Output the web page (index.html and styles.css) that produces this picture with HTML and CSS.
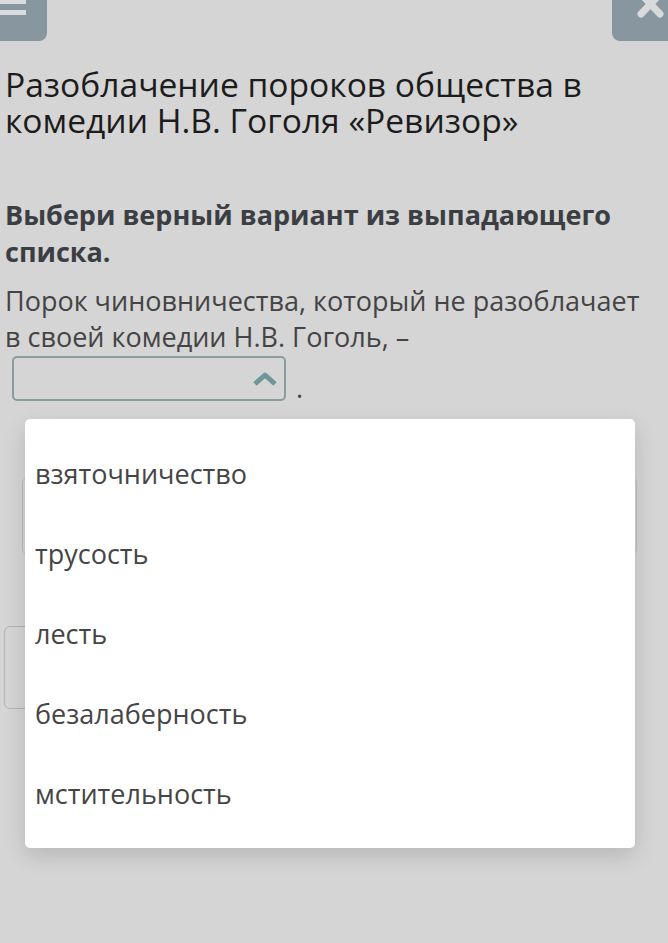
FILE: index.html
```html
<!DOCTYPE html>
<html lang="ru">
<head>
  <meta charset="UTF-8" />
  <meta name="viewport" content="width=device-width, initial-scale=1.0"/>
  <title>Ревизор - задание</title>
  <link rel="stylesheet" href="styles.css">
</head>
<body>
  <header class="topbar">
    <button class="corner-btn menu-btn" aria-label="Меню">
      <svg width="30" height="18" viewBox="0 0 30 18">
        <rect x="0" y="-4" width="26" height="8" fill="#d9dcdf"/>
        <rect x="0" y="10" width="26" height="5" fill="#d9dcdf"/>
      </svg>
    </button>
    <button class="corner-btn close-btn" aria-label="Закрыть">
      <svg width="34" height="22" viewBox="0 0 34 22">
        <path d="M7 -6 L26 14 M26 -6 L7 14" stroke="#d8dadc" stroke-width="7" stroke-linecap="round"/>
      </svg>
    </button>
  </header>

  <main class="task">
    <h1 class="task-title">Разоблачение пороков общества в комедии Н.В. Гоголя «Ревизор»</h1>

    <p class="task-hint">Выбери верный вариант из выпадающего списка.</p>

    <p class="question">Порок чиновничества, который не разоблачает в своей комедии Н.В. Гоголь, –</p>

    <div class="answer-line">
      <div class="select-box">
        <svg class="chevron" width="26" height="16" viewBox="0 0 26 16">
          <path d="M3 13 L13 4 L23 13" fill="none" stroke="#6f9698" stroke-width="5" stroke-linejoin="round"/>
        </svg>
      </div>
      <span class="dot">.</span>
    </div>

    <div class="hidden-card"></div>
    <div class="hidden-btn"></div>

    <ul class="dropdown">
      <li>взяточничество</li>
      <li>трусость</li>
      <li>лесть</li>
      <li>безалаберность</li>
      <li>мстительность</li>
    </ul>
  </main>
</body>
</html>
```

FILE: styles.css
```css
body {
  margin: 0;
  font-family: "Open Sans", "Noto Sans", sans-serif;
  background: #d5d5d5;
  color: #333;
  height: 943px;
  overflow: hidden;
}
.topbar {
  display: flex;
  justify-content: space-between;
  height: 41px;
}
.corner-btn {
  border: none;
  padding: 0;
  background: #8896a0;
  height: 41px;
  display: flex;
}
.menu-btn {
  width: 47px;
  border-radius: 0 0 8px 0;
}
.close-btn {
  width: 56px;
  border-radius: 0 0 0 8px;
  justify-content: flex-end;
}
.task {
  position: relative;
  padding: 0 0 0 5px;
}
.task-title {
  margin: 25px 0 0;
  font-size: 33.6px;
  line-height: 36px;
  font-weight: 400;
  color: #1c1c1c;
  padding-right: 60px;
}
.task-hint {
  margin: 58px 0 0;
  font-size: 27px;
  line-height: 37px;
  font-weight: 700;
  color: #3b3e42;
}
.question {
  margin: 13px 0 0;
  font-size: 27px;
  line-height: 36px;
  color: #444;
  padding-right: 20px;
}
.answer-line {
  display: flex;
  align-items: flex-end;
  gap: 10px;
  margin: 1px 0 0 7px;
}
.select-box {
  width: 264px;
  height: 41px;
  border: 2px solid #8a9c9e;
  border-radius: 5px;
  display: flex;
  align-items: center;
  justify-content: flex-end;
  padding-right: 6px;
  box-sizing: content-box;
}
.dot {
  font-size: 27px;
  line-height: 26px;
  color: #444;
}
.hidden-card {
  margin: 76px 0 0 17px;
  width: 613px;
  height: 76px;
  border: 1px solid #bdbdbd;
  border-radius: 6px;
}
.hidden-btn {
  margin: 71px 0 0 -1px;
  width: 200px;
  height: 81px;
  border: 1px solid #b3b3b3;
  border-radius: 6px;
}
.dropdown {
  position: absolute;
  left: 25px;
  top: 353px;
  width: 610px;
  margin: 0;
  padding: 15px 0 14px;
  list-style: none;
  background: #fff;
  border-radius: 5px;
  box-shadow: 0 8px 22px rgba(0, 0, 0, 0.14);
}
.dropdown li {
  height: 80px;
  line-height: 80px;
  padding-left: 10px;
  font-size: 27px;
  color: #454545;
}
```
